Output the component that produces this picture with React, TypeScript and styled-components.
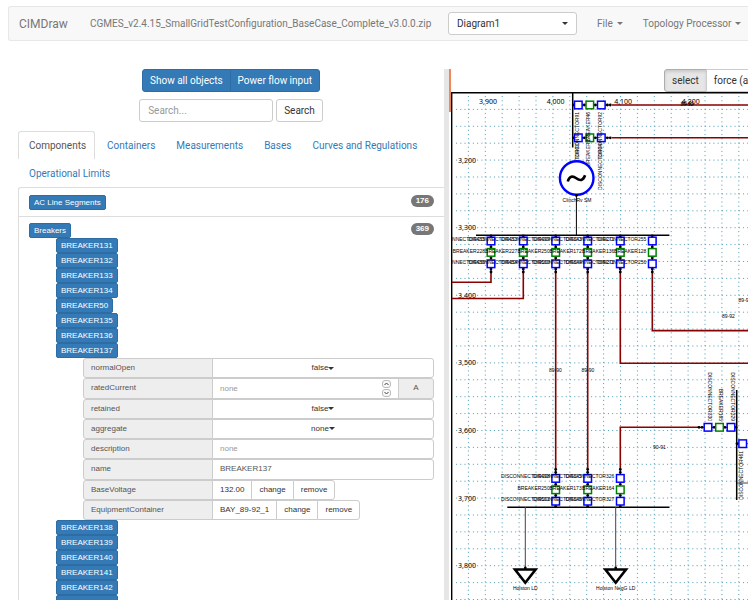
import React from "react";
import styled, { createGlobalStyle, css } from "styled-components";

const Global = createGlobalStyle`
  *, *::before, *::after { box-sizing: border-box; }
  body {
    margin: 0;
    background: #fff;
    color: #333;
    font-family: Roboto, "Liberation Sans", Arial, sans-serif;
    font-size: 10px;
    line-height: 14px;
    overflow: hidden;
  }
  button, input, select { font: inherit; color: inherit; margin: 0; }
  ul { list-style: none; margin: 0; padding: 0; }
  a { text-decoration: none; color: #337ab7; }
`;

const Page = styled.div`
  display: flex;
  flex-direction: column;
  height: 100vh;
  overflow: hidden;
`;

const Navbar = styled.nav`
  display: flex;
  flex: none;
  align-items: center;
  height: 35px;
  margin: 6px 0 28px 8px;
  padding-left: 10px;
  border: 1px solid #e7e7e7;
  border-right: 0;
  border-radius: 3px 0 0 3px;
  background: #f8f8f8;
  color: #777;
  white-space: nowrap;
`;

const Brand = styled.a`
  flex: none;
  width: 71px;
  font-size: 12px;
  color: #777;
`;

const FileName = styled.span`
  flex: none;
  width: 358px;
`;

const DiagramPicker = styled.label`
  display: flex;
  flex: none;
  align-items: center;
  position: relative;
  width: 129px;
  margin-right: 10px;
  color: #333;

  select {
    appearance: none;
    width: 100%;
    height: 23px;
    padding: 0 8px;
    border: 1px solid #ccc;
    border-radius: 3px;
    background: #fff;
  }
  svg { position: absolute; right: 9px; }
`;

const NavMenu = styled.button`
  display: flex;
  flex: none;
  align-items: center;
  gap: 4px;
  padding: 0 10px;
  border: 0;
  background: none;
  white-space: nowrap;
`;

const Workspace = styled.main`
  display: grid;
  grid-template-columns: minmax(380px, 444px) 7px minmax(0, 1fr);
  flex: 1;
  min-height: 0;
`;

const Sidebar = styled.section`
  padding-left: 18px;
  min-width: 0;
  overflow: hidden;
`;

const CenterRow = styled.form`
  display: flex;
  justify-content: center;
  gap: 3px;
  margin-bottom: 7px;
`;

const ButtonGroup = styled.div`
  display: flex;
  > * + * { margin-left: -1px; }
  > *:not(:first-child) { border-top-left-radius: 0; border-bottom-left-radius: 0; }
  > *:not(:last-child) { border-top-right-radius: 0; border-bottom-right-radius: 0; }
`;

const Button = styled.button<{ $primary?: boolean; $pressed?: boolean }>`
  height: 23px;
  padding: 0 7px;
  border: 1px solid #ccc;
  border-radius: 3px;
  background: #fff;
  color: #333;
  white-space: nowrap;
  ${(p) => p.$primary && css`background: #337ab7; border-color: #2e6da4; color: #fff;`}
  ${(p) => p.$pressed && css`background: #e6e6e6; border-color: #adadad; box-shadow: inset 0 2px 3px rgba(0, 0, 0, 0.12);`}
`;

const SearchInput = styled.input`
  width: 134px;
  height: 23px;
  padding: 0 8px;
  border: 1px solid #ccc;
  border-radius: 3px;
  &::placeholder { color: #999; }
`;

const Tabs = styled.ul`
  display: flex;
  flex-wrap: wrap;
  margin-top: 9px;
`;

const Tab = styled.a<{ $active?: boolean }>`
  display: block;
  height: 28px;
  margin-right: 1px;
  padding: 7px 8px 0 10px;
  border: 1px solid transparent;
  border-bottom: 0;
  border-radius: 3px 3px 0 0;
  ${(p) => p.$active && css`color: #555; border-color: #ddd;`}
`;

const Panel = styled.ul`
  border: 1px solid #ddd;
  border-right: 0;
  border-radius: 3px 0 0 0;
  font-family: "Liberation Sans", Arial, sans-serif;
`;

const PanelItem = styled.li`
  padding: 7px 10px 6px;
  & + & { padding-top: 6px; border-top: 1px solid #ddd; }
`;

const PanelHead = styled.div`
  display: flex;
  justify-content: space-between;
  align-items: flex-start;
`;

const Tag = styled.button`
  display: block;
  height: 15px;
  padding: 0 4px;
  border: 1px solid #2e6da4;
  border-radius: 2px;
  background: #337ab7;
  color: #fff;
  font-size: 8px;
  line-height: 13px;
`;

const Badge = styled.span`
  padding: 0 5px;
  border-radius: 6px;
  background: #777;
  color: #fff;
  font-size: 8px;
  font-weight: bold;
  line-height: 12px;
`;

const Breakers = styled.ul`
  padding-left: 27px;
`;

const Properties = styled.div`
  display: grid;
  grid-auto-rows: 1fr;
  height: 162px;
  margin-left: 27px;
  font-size: 8px;
`;

const Property = styled.div`
  display: flex;
  min-height: 0;
  > * + * { margin-left: -1px; }
  > *:last-child { border-radius: 0 3px 3px 0; }
`;

const Name = styled.label`
  display: flex;
  flex: 0 0 130px;
  align-items: center;
  padding-left: 7px;
  border: 1px solid #ccc;
  border-radius: 3px 0 0 3px;
  background: #eee;
  color: #555;
`;

const ValueInput = styled.input`
  flex: 1;
  min-width: 0;
  padding: 0 7px;
  border: 1px solid #ccc;
  color: #555;
  appearance: textfield;
  &::placeholder { color: #999; }
  &::-webkit-inner-spin-button { display: none; }
`;

const NumberBox = styled.div`
  display: flex;
  flex: 1;
  align-items: center;
  padding-right: 7px;
  border: 1px solid #ccc;
  input { border: 0; height: 100%; }
`;

const Spinners = styled.div`
  display: grid;
  gap: 1px;
`;

const Spin = styled.button`
  display: grid;
  place-items: center;
  width: 9px;
  height: 8px;
  padding: 0;
  border: 1px solid #bbb;
  border-radius: 3px;
  background: #f8f8f8;
`;

const Unit = styled.span`
  display: grid;
  place-items: center;
  width: 36px;
  border: 1px solid #ccc;
  background: #eee;
  color: #555;
`;

const Choice = styled.button`
  display: flex;
  flex: 1;
  align-items: center;
  justify-content: center;
  border: 1px solid #ccc;
  background: #fff;
`;

const LinkPart = styled.button`
  padding: 0 7px;
  border: 1px solid #ccc;
  background: #fff;
`;

const Splitter = styled.div`
  border-left: 5px solid #e6e6e6;
  &::after {
    content: "";
    display: block;
    height: 43px;
    background: #f0875a;
  }
`;

const DiagramPane = styled.section`
  display: flex;
  flex-direction: column;
  min-width: 0;
  overflow: hidden;
`;

const Toolbar = styled.div`
  display: flex;
  padding-left: 213px;
`;

const Canvas = styled.svg`
  display: block;
  flex: 1;
  width: 100%;
  min-height: 0;
  font-family: "Liberation Sans", Arial, sans-serif;
  font-size: 5px;
  fill: #000;
`;

const Caret = () => (
  <svg width="6" height="3" viewBox="0 0 6 3" fill="currentColor" aria-hidden="true">
    <path d="M0 0h6L3 3z" />
  </svg>
);

const BLUE = "#0000ff";
const GREEN = "#008000";
const WIRE = "#8b0000";

type Label = [string, string, string];

const Box = ({ x, y, color }: { x: number; y: number; color: string }) => (
  <rect x={x - 3.8} y={y - 3.8} width="7.6" height="7.6" fill="#fff" stroke={color} strokeWidth="1.5" />
);

const KINDS = [BLUE, GREEN, BLUE];

/* Disconnector, breaker, disconnector stacked downwards from a start point. */
const Column = ({ x, y, up }: { x: number; y: number; up?: boolean }) => (
  <g>
    <path d={up ? `M${x} ${y - 9}V${y + 29}` : `M${x} ${y - 6}V${y + 31}`} stroke="#000" strokeWidth="1" />
    {(up ? [-9, -6, 6, 17, 28] : [-5, 6, 17, 28, 31]).map((d) => (
      <circle key={d} cx={x} cy={y + d} r="1.4" />
    ))}
    {KINDS.map((c, i) => <Box key={i} x={x} y={y + i * 11.4} color={c} />)}
  </g>
);

const ColumnLabels = ({ x, y, names }: { x: number; y: number; names: Label }) => (
  <>
    {names.map((n, i) => (
      <text key={n} x={x - 6} y={y + i * 11.5} textAnchor="end">{n}</text>
    ))}
  </>
);

const Row = ({ x, y, left }: { x: number; y: number; left?: boolean }) => (
  <g>
    <path d={left ? `M${x - 9} ${y}H${x + 29}` : `M${x - 6} ${y}H${x + 31}`} stroke="#000" strokeWidth="1" />
    {(left ? [-9, -6, 6, 17, 28] : [-5, 6, 17, 29, 32]).map((d) => (
      <circle key={d} cx={x + d} cy={y} r="1.4" />
    ))}
    {KINDS.map((c, i) => <Box key={i} x={x + i * 11.5} y={y} color={c} />)}
  </g>
);

const range = (n: number) => Array.from({ length: n }, (_, i) => i);

const upper: [number, Label][] = [
  [491, ["DISCONNECTOR455", "BREAKER228", "DISCONNECTOR456"]],
  [523.3, ["DISCONNECTOR453", "BREAKER227", "DISCONNECTOR454"]],
  [555.7, ["DISCONNECTOR499", "BREAKER250", "DISCONNECTOR500"]],
  [587.7, ["DISCONNECTOR343", "BREAKER172", "DISCONNECTOR344"]],
  [620.3, ["DISCONNECTOR271", "BREAKER136", "DISCONNECTOR272"]],
  [652.3, ["DISCONNECTOR255", "BREAKER128", "DISCONNECTOR256"]],
];

const lower: [number, Label][] = [
  [555.7, ["DISCONNECTOR498", "BREAKER250", "DISCONNECTOR501"]],
  [587.7, ["DISCONNECTOR345", "BREAKER173", "DISCONNECTOR346"]],
  [620.3, ["DISCONNECTOR326", "BREAKER164", "DISCONNECTOR327"]],
];

const turned: [number, number, number, string][] = [
  [578.5, 112, -90, "DISCONNECTOR91"],
  [589.8, 112, -90, "BREAKER46"],
  [601.8, 112, -90, "DISCONNECTOR92"],
  [578.5, 144, -90, "DISCONNECTOR93"],
  [589.8, 134, -90, "BREAKER178"],
  [601.8, 144, -90, "DISCONNECTOR94"],
  [707.5, 421, 90, "DISCONNECTOR330"],
  [719, 421, 90, "BREAKER165"],
  [730.5, 421, 90, "DISCONNECTOR329"],
  [743, 451, -90, "DISCONNECTOR461"],
];

const lineNames: [number, number, string][] = [
  [687, 105.5, "89-92"],
  [688, 105, "90-91"],
  [728.5, 318, "89-92"],
  [745, 302, "89-92"],
  [555.5, 371.5, "89-90"],
  [588, 371.5, "89-90"],
  [659.5, 448.5, "90-91"],
  [577, 201.5, "ClinchRv SM"],
  [525.3, 590, "Holston LD"],
  [615.7, 590, "Holston NegG LD"],
];

const Diagram = () => (
  <Canvas role="img" aria-label="Diagram1">
    <g transform="translate(-451 -92)">
      <g stroke="#5aa3bd" strokeWidth="1" strokeDasharray="1.1 3.12">
        {range(30).map((i) => <path key={i} d={`M456 ${109.4 + i * 16.9}H2400`} />)}
        {range(110).map((i) => <path key={i} d={`M${468.4 + i * 16.9} 96V2000`} />)}
      </g>
      <path d="M451.5 2000V92.5H2400" fill="none" stroke="#000" strokeWidth="1.8" />

      <g fill="none" stroke={WIRE} strokeWidth="1.6">
        <path d="M612 105H2400M612 137.8H2400" />
        <path d="M491 272V282.3H452M523.3 272V298.5H452" />
        <path d="M555.7 272V470M587.7 272V470" />
        <path d="M620.3 272V363.3H2400M652.3 272V330.6H2400" />
        <path d="M620.3 470V427.3H699" />
      </g>
      <g fill="none" stroke="#000">
        <path d="M572.7 92V147.5M476 235.2H669.4M507.3 507.3H669.5M736.7 390V500" strokeWidth="1.5" />
        <path d="M576.4 195V235" />
        <path d="M525.3 507V569M615.7 507V569M737 483H2400M737 443.7H2400" stroke="#444" strokeWidth="1" />
      </g>

      {[105, 137.8].map((y) => <Row key={y} x={578.3} y={y} />)}
      <Row x={708} y={427.3} left />
      {upper.map(([x]) => <Column key={x} x={x} y={241} />)}
      {lower.map(([x]) => <Column key={x} x={x} y={478.4} up />)}
      <circle cx="737" cy="443.7" r="1.4" />
      <Box x={742.7} y={443.7} color={BLUE} />

      {[525.3, 615.7].map((x) => (
        <g key={x}>
          <path d={`M${x - 10.3} 569.5H${x + 10.3}L${x} 582.7Z`} fill="#fff" stroke="#000" strokeWidth="2.6" />
          <circle cx={x} cy="568" r="1.4" />
        </g>
      ))}

      {upper.map(([x, n]) => <ColumnLabels key={x} x={x} y={241} names={n} />)}
      {lower.map(([x, n]) => <ColumnLabels key={x} x={x} y={478.4} names={n} />)}
      {turned.map(([x, y, a, n]) => (
        <text key={n} textAnchor="end" transform={`translate(${x} ${y}) rotate(${a})`}>{n}</text>
      ))}

      <circle cx="576.7" cy="178" r="16.8" fill="#fff" stroke={BLUE} strokeWidth="2.4" />
      <circle cx="576.4" cy="195.5" r="1.4" />
      <path d="M567.8 181.5c1.5-5.5 4.8-6 8.5-3.2s6.8 2.500 8.800-3" fill="none" stroke="#000" strokeWidth="2.6" />
      {lineNames.map(([x, y, n]) => <text key={`${x}`} x={x} y={y} textAnchor="middle">{n}</text>)}

      <g fontFamily="Noto Sans, sans-serif" fontSize="7">
        {["3,900", "4,000", "4,100", "4,200"].map((t, i) => (
          <text key={t} x={488 + i * 67.6} y="103.5" textAnchor="middle">{t}</text>
        ))}
        {range(7).map((i) => (
          <text key={i} x="458" y={162.5 + i * 67.6}>{`3,${i + 2}00`}</text>
        ))}
      </g>
    </g>
  </Canvas>
);

const ChoiceRow = ({ name, value }: { name: string; value: string }) => (
  <Property>
    <Name htmlFor={name}>{name}</Name>
    <Choice id={name} type="button" aria-haspopup="listbox">{value}<Caret /></Choice>
  </Property>
);

const TextRow = ({ name, value }: { name: string; value?: string }) => (
  <Property>
    <Name htmlFor={name}>{name}</Name>
    <ValueInput id={name} placeholder="none" defaultValue={value} />
  </Property>
);

const LinkRow = ({ name, value }: { name: string; value: string }) => (
  <Property>
    <Name htmlFor={name}>{name}</Name>
    <LinkPart id={name} type="button">{value}</LinkPart>
    <LinkPart type="button">change</LinkPart>
    <LinkPart type="button">remove</LinkPart>
  </Property>
);

const BreakerList = ({ ids }: { ids: number[] }) => (
  <Breakers>
    {ids.map((id) => <li key={id}><Tag type="button">BREAKER{id}</Tag></li>)}
  </Breakers>
);

const TABS = ["Components", "Containers", "Measurements", "Bases", "Curves and Regulations", "Operational Limits"];

export default function App() {
  return (
    <Page>
      <Global />
      <Navbar>
        <Brand href="#">CIMDraw</Brand>
        <FileName>CGMES_v2.4.15_SmallGridTestConfiguration_BaseCase_Complete_v3.0.0.zip</FileName>
        <DiagramPicker>
          <select aria-label="Diagram"><option>Diagram1</option></select>
          <Caret />
        </DiagramPicker>
        <NavMenu type="button">File <Caret /></NavMenu>
        <NavMenu type="button">Topology Processor <Caret /></NavMenu>
      </Navbar>
      <Workspace>
        <Sidebar>
          <CenterRow as="div">
            <ButtonGroup>
              <Button $primary type="button">Show all objects</Button>
              <Button $primary type="button">Power flow input</Button>
            </ButtonGroup>
          </CenterRow>
          <CenterRow>
            <SearchInput aria-label="Search" placeholder="Search..." />
            <Button type="button">Search</Button>
          </CenterRow>
          <Tabs>
            {TABS.map((t, i) => <li key={t}><Tab href="#" $active={i === 0}>{t}</Tab></li>)}
          </Tabs>
          <Panel>
            <PanelItem>
              <PanelHead><Tag type="button">AC Line Segments</Tag><Badge>176</Badge></PanelHead>
            </PanelItem>
            <PanelItem>
              <PanelHead><Tag type="button">Breakers</Tag><Badge>369</Badge></PanelHead>
              <BreakerList ids={[131, 132, 133, 134, 50, 135, 136, 137]} />
              <Breakers as="div">
                <Properties>
                  <ChoiceRow name="normalOpen" value="false" />
                  <Property>
                    <Name htmlFor="ratedCurrent">ratedCurrent</Name>
                    <NumberBox>
                      <ValueInput id="ratedCurrent" type="number" placeholder="none" />
                      <Spinners>
                        <Spin type="button" aria-label="Increase">
                          <svg width="5" height="4" fill="none" stroke="#444"><path d="M.5 3l2-2 2 2" /></svg>
                        </Spin>
                        <Spin type="button" aria-label="Decrease">
                          <svg width="5" height="4" fill="none" stroke="#444"><path d="M.5 1l2 2 2-2" /></svg>
                        </Spin>
                      </Spinners>
                    </NumberBox>
                    <Unit>A</Unit>
                  </Property>
                  <ChoiceRow name="retained" value="false" />
                  <ChoiceRow name="aggregate" value="none" />
                  <TextRow name="description" />
                  <TextRow name="name" value="BREAKER137" />
                  <LinkRow name="BaseVoltage" value="132.00" />
                  <LinkRow name="EquipmentContainer" value="BAY_89-92_1" />
                </Properties>
              </Breakers>
              <BreakerList ids={[138, 139, 140, 141, 142, 143]} />
            </PanelItem>
          </Panel>
        </Sidebar>
        <Splitter />
        <DiagramPane>
          <Toolbar>
            <ButtonGroup>
              <Button $pressed type="button">select</Button>
              <Button type="button">force (auto)</Button>
            </ButtonGroup>
          </Toolbar>
          <Diagram />
        </DiagramPane>
      </Workspace>
    </Page>
  );
}
